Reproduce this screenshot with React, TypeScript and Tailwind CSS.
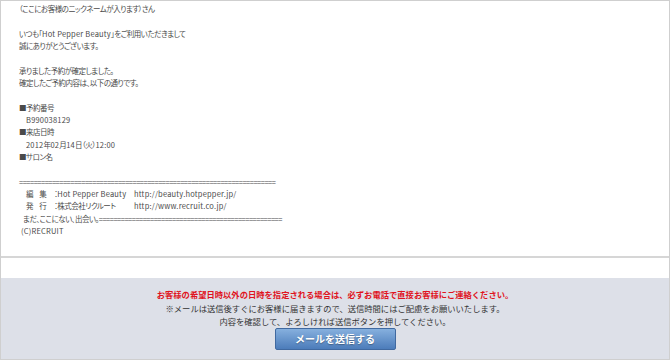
import React from 'react';

const L: React.FC<{ children: React.ReactNode }> = ({ children }) => (
  <span className="tracking-[0.2px]">{children}</span>
);

const mailLines: React.ReactNode[] = [
  '（ここにお客様のニックネームが入ります）さん',
  '',
  <>いつも「<L>Hot Pepper Beauty</L>」をご利用いただきまして</>,
  '誠にありがとうございます。',
  '',
  '承りました予約が確定しました。',
  '確定したご予約内容は、以下の通りです。',
  '',
  '■予約番号',
  <span className="pl-[7px]"><L>B990038129</L></span>,
  '■来店日時',
  <span className="pl-[7px]"><L>2012</L>年<L>02</L>月<L>14</L>日（火）<L>12:00</L></span>,
  '■サロン名',
  '',
  '======================================================================',
];

const FooterRow: React.FC<{ label: string; value: React.ReactNode; url: string }> = ({ label, value, url }) => (
  <div className="flex whitespace-pre">
    <span className="w-[35px] pl-[7px] tracking-[2px]">{label}</span>
    <span className="w-[80px]">：{value}</span>
    <L>{url}</L>
  </div>
);

export default function App() {
  return (
    <div className="w-[670px] h-[360px] bg-white border border-[#cfcfcf] flex flex-col font-['Noto_Sans_CJK_JP',sans-serif]">
      <div
        className="h-[257px] border-b-2 border-[#d6d6d6] pt-[2px] pl-[18px] text-[7.5px] tracking-[-0.5px] leading-[12.33px] text-[#4a4a4a]"
        style={{ fontFeatureSettings: '"palt"' }}
      >
        {mailLines.map((line, i) => (
          <div key={i} className="h-[12.33px] whitespace-pre">
            {line}
          </div>
        ))}
        <FooterRow label="編 集" value={<L>Hot Pepper Beauty</L>} url="http://beauty.hotpepper.jp/" />
        <FooterRow label="発 行" value="株式会社リクルート" url="http://www.recruit.co.jp/" />
        <div className="whitespace-pre pl-[4px]">まだ、ここにない、出会い。==================================================</div>
        <div className="whitespace-pre pl-[2px]"><L>(C)RECRUIT</L></div>
      </div>

      <div className="h-[20px]" />

      <div className="flex-1 bg-[#dde0e8] flex flex-col items-center pt-[10px] text-[8.3px] leading-[13.5px]">
        <p className="text-[#e0141e] font-bold">
          お客様の希望日時以外の日時を指定される場合は、必ずお電話で直接お客様にご連絡ください。
        </p>
        <p className="text-[#333]">※メールは送信後すぐにお客様に届きますので、送信時間にはご配慮をお願いいたします。</p>
        <p className="text-[#333]">内容を確認して、よろしければ送信ボタンを押してください。</p>
        <button className="-mt-[1px] w-[121px] h-[22px] rounded-[2px] border border-[#4069a0] bg-gradient-to-b from-[#86b0de] to-[#4c7cba] text-white text-[10px] font-bold [text-shadow:0_1px_1px_rgba(0,0,0,0.3)]">
          メールを送信する
        </button>
      </div>
    </div>
  );
}
